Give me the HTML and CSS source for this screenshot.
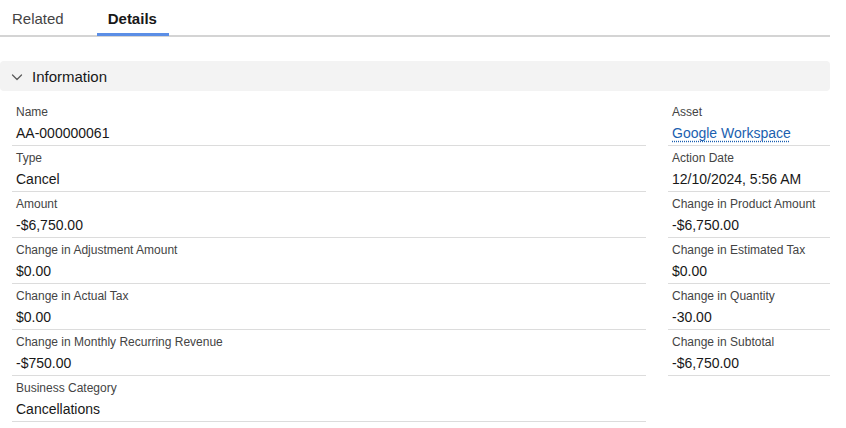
FILE: index.html
```html
<!DOCTYPE html>
<html lang="en">
<head>
<meta charset="utf-8">
<title>Details</title>
<link rel="stylesheet" href="styles.css">
</head>
<body>
<div class="page">
  <nav class="tabs">
    <a class="tab">Related</a>
    <a class="tab tab-active">Details</a>
  </nav>

  <section class="section">
    <button class="section-header">
      <svg class="chevron" width="12" height="12" viewBox="0 0 12 12"><path d="M1.5 4 L6 8.5 L10.5 4" fill="none" stroke="#5c5c5c" stroke-width="1.3" stroke-linecap="round" stroke-linejoin="round"/></svg>
      <span class="section-title">Information</span>
    </button>

    <div class="fields">
      <div class="col col-left">
        <div class="field"><div class="label">Name</div><div class="value">AA-000000061</div></div>
        <div class="field"><div class="label">Type</div><div class="value">Cancel</div></div>
        <div class="field"><div class="label">Amount</div><div class="value">-$6,750.00</div></div>
        <div class="field"><div class="label">Change in Adjustment Amount</div><div class="value">$0.00</div></div>
        <div class="field"><div class="label">Change in Actual Tax</div><div class="value">$0.00</div></div>
        <div class="field"><div class="label">Change in Monthly Recurring Revenue</div><div class="value">-$750.00</div></div>
        <div class="field"><div class="label">Business Category</div><div class="value">Cancellations</div></div>
      </div>
      <div class="col col-right">
        <div class="field"><div class="label">Asset</div><div class="value"><a class="link">Google Workspace</a></div></div>
        <div class="field"><div class="label">Action Date</div><div class="value">12/10/2024, 5:56 AM</div></div>
        <div class="field"><div class="label">Change in Product Amount</div><div class="value">-$6,750.00</div></div>
        <div class="field"><div class="label">Change in Estimated Tax</div><div class="value">$0.00</div></div>
        <div class="field"><div class="label">Change in Quantity</div><div class="value">-30.00</div></div>
        <div class="field"><div class="label">Change in Subtotal</div><div class="value">-$6,750.00</div></div>
      </div>
    </div>
  </section>
</div>
</body>
</html>
```

FILE: styles.css
```css
* { box-sizing: border-box; }
html, body { margin: 0; padding: 0; background: #ffffff; }
body {
  font-family: "Liberation Sans", Arial, sans-serif;
  color: #181818;
}
.page { width: 830px; }

.tabs {
  display: flex;
  gap: 21px;
  height: 37px;
  border-bottom: 2px solid #d4d4d4;
}
.tab {
  display: block;
  padding: 0 12px 0 12px;
  height: 37px;
  line-height: 38px;
  font-size: 15px;
  color: #444444;
}
.tab-active {
  padding: 0 12px 0 11px;
  color: #181818;
  font-weight: bold;
  box-shadow: inset 0 -3px 0 #5b8ee6;
  margin-bottom: -1px;
  height: 36px;
}

.section { margin-top: 24px; }
.section-header {
  display: flex;
  align-items: center;
  width: 830px;
  height: 30px;
  margin: 0;
  padding: 0 0 0 11px;
  border: 0;
  border-radius: 4px;
  background: #f3f3f3;
  font: inherit;
  cursor: pointer;
}
.chevron { margin-top: 1px; }
.section-title {
  margin-left: 9px;
  font-size: 15px;
  color: #181818;
}

.fields {
  display: grid;
  grid-template-columns: 634px 162px;
  column-gap: 22px;
  padding-left: 12px;
  margin-top: 9px;
}
.field {
  padding: 3px 4px 2px;
  border-bottom: 1px solid #dcdcdc;
}
.label {
  font-size: 12px;
  line-height: 18px;
  color: #444444;
}
.value {
  margin-top: 2px;
  font-size: 14px;
  line-height: 20px;
  color: #181818;
}
.link {
  color: #1b5fb0;
  text-decoration: underline dotted;
  text-underline-offset: 3px;
  text-decoration-color: #1b5fb0;
}
```
